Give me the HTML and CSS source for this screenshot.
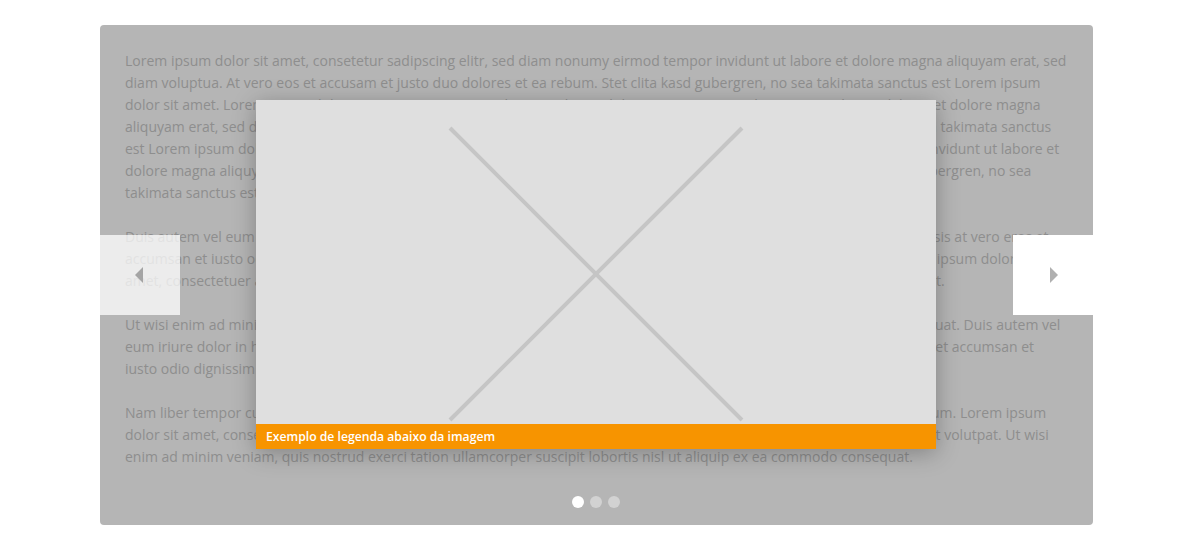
FILE: index.html
```html
<!DOCTYPE html>
<html lang="pt">
<head>
<meta charset="utf-8">
<title>Slider</title>
<link rel="stylesheet" href="styles.css">
</head>
<body>
<div class="stage">
  <div class="content">
    <p>Lorem ipsum dolor sit amet, consetetur sadipscing elitr, sed diam nonumy eirmod tempor invidunt ut labore et dolore magna aliquyam erat, sed diam voluptua. At vero eos et accusam et justo duo dolores et ea rebum. Stet clita kasd gubergren, no sea takimata sanctus est Lorem ipsum dolor sit amet. Lorem ipsum dolor sit amet, consetetur sadipscing elitr, sed diam nonumy eirmod tempor invidunt ut labore et dolore magna aliquyam erat, sed diam voluptua. At vero eos et accusam et justo duo dolores et ea rebum. Stet clita kasd gubergren, no sea takimata sanctus est Lorem ipsum dolor sit amet. Lorem ipsum dolor sit amet, consetetur sadipscing elitr, sed diam nonumy eirmod tempor invidunt ut labore et dolore magna aliquyam erat, sed diam voluptua. At vero eos et accusam et justo duo dolores et ea rebum. Stet clita kasd gubergren, no sea takimata sanctus est Lorem ipsum dolor sit amet.</p>
    <p>Duis autem vel eum iriure dolor in hendrerit in vulputate velit esse molestie consequat, vel illum dolore eu feugiat nulla facilisis at vero eros et accumsan et iusto odio dignissim qui blandit praesent luptatum zzril delenit augue duis dolore te feugait nulla facilisi. Lorem ipsum dolor sit amet, consectetuer adipiscing elit, sed diam nonummy nibh euismod tincidunt ut laoreet dolore magna aliquam erat volutpat.</p>
    <p>Ut wisi enim ad minim veniam, quis nostrud exerci tation ullamcorper suscipit lobortis nisl ut aliquip ex ea commodo consequat. Duis autem vel eum iriure dolor in hendrerit in vulputate velit esse molestie consequat, vel illum dolore eu feugiat nulla facilisis at vero eros et accumsan et iusto odio dignissim qui blandit praesent luptatum zzril delenit augue duis dolore te feugait nulla facilisi.</p>
    <p>Nam liber tempor cum soluta nobis eleifend option congue nihil imperdiet doming id quod mazim placerat facer possim assum. Lorem ipsum dolor sit amet, consectetuer adipiscing elit, sed diam nonummy nibh euismod tincidunt ut laoreet dolore magna aliquam erat volutpat. Ut wisi enim ad minim veniam, quis nostrud exerci tation ullamcorper suscipit lobortis nisl ut aliquip ex ea commodo consequat.</p>
  </div>
  <div class="dots">
    <span class="dot active"></span>
    <span class="dot"></span>
    <span class="dot"></span>
  </div>

  <button class="nav prev" aria-label="Anterior"><span class="tri tri-left"></span></button>
  <button class="nav next" aria-label="Próximo"><span class="tri tri-right"></span></button>

  <figure class="slide">
    <div class="image">
      <svg class="placeholder" width="680" height="324" viewBox="0 0 680 324">
        <line x1="194" y1="28" x2="486" y2="320" stroke="#c5c5c5" stroke-width="4"/>
        <line x1="486" y1="28" x2="194" y2="320" stroke="#c5c5c5" stroke-width="4"/>
      </svg>
    </div>
    <figcaption class="caption">Exemplo de legenda abaixo da imagem</figcaption>
  </figure>
</div>
</body>
</html>
```

FILE: styles.css
```css
html, body {
  margin: 0;
  padding: 0;
  background: #ffffff;
}

body {
  font-family: "Open Sans", "Liberation Sans", sans-serif;
}

.stage {
  position: relative;
  width: 993px;
  margin: 25px 0 0 100px;
  background: #b5b5b5;
  border-radius: 4px;
  box-sizing: border-box;
  padding: 25px 25px 17px 25px;
}

.content p {
  margin: 0 0 22px 0;
  font-size: 14px;
  line-height: 22px;
  color: #8e8e8e;
}

.dots {
  display: flex;
  justify-content: center;
  gap: 6px;
  padding-top: 6px;
  padding-right: 2px;
}

.dot {
  width: 12px;
  height: 12px;
  border-radius: 50%;
  background: #d2d2d2;
}

.dot.active {
  background: #ffffff;
}

.nav {
  position: absolute;
  top: 210px;
  width: 80px;
  height: 80px;
  border: 0;
  padding: 0;
  margin: 0;
  display: flex;
  align-items: center;
  justify-content: center;
}

.prev {
  left: 0;
  background: rgba(255, 255, 255, 0.74);
}

.next {
  right: 0;
  background: #ffffff;
}

.tri {
  width: 0;
  height: 0;
  border-top: 8px solid transparent;
  border-bottom: 8px solid transparent;
}

.tri-left {
  border-right: 8px solid #a4a4a4;
  margin-left: -2px;
}

.tri-right {
  border-left: 8px solid #b0b0b0;
  margin-left: 2px;
}

.slide {
  position: absolute;
  left: 156px;
  top: 75px;
  width: 680px;
  margin: 0;
  box-shadow: 0 4px 22px rgba(0, 0, 0, 0.28);
}

.image {
  height: 324px;
  background: #dfdfdf;
}

.placeholder {
  display: block;
}

.caption {
  height: 25px;
  line-height: 25px;
  background: #f79400;
  color: #ffffff;
  font-size: 12.2px;
  font-weight: 600;
  padding-left: 10px;
}
```
